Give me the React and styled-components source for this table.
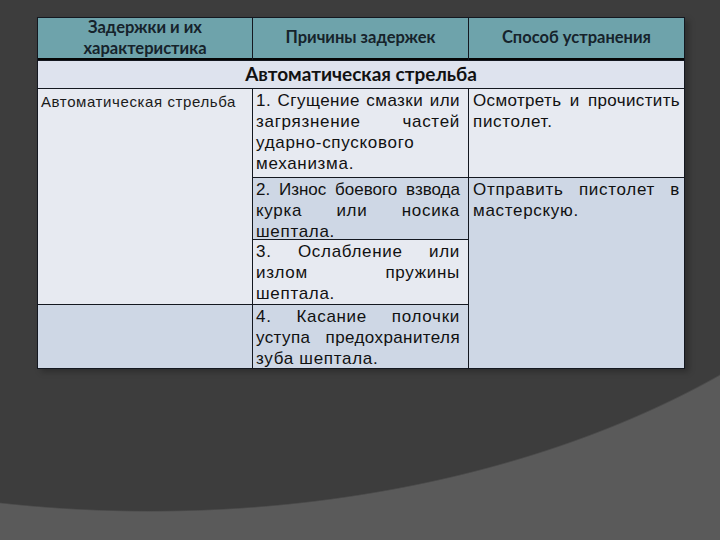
import React from 'react'
import styled, { createGlobalStyle } from 'styled-components'

const GlobalStyle = createGlobalStyle`
  html, body {
    margin: 0;
    padding: 0;
  }
  body {
    width: 720px;
    height: 540px;
    overflow: hidden;
  }
`

const Slide = styled.div`
  width: 720px;
  height: 540px;
  box-sizing: border-box;
  padding: 17px 0 0 37px;
  background:
    radial-gradient(840px 512px at 150px 0px, #3d3d3d 99.7%, #5a5a5a 100%);
`

const Table = styled.div`
  display: grid;
  grid-template-columns: 214px 215px 215px;
  grid-template-rows: 42px 27px 88px 61px 64px 63px;
  gap: 1px;
  width: 646px;
  background: #141820;
  border: 1px solid #141820;
  box-shadow: 4px 3px 6px rgba(0, 0, 0, 0.25);
`

const HeadCell = styled.div`
  background: #6ea3ab;
  border-bottom: 2px solid #050505;
  display: flex;
  align-items: center;
  justify-content: center;
  text-align: center;
  font-family: Lato, 'Open Sans', sans-serif;
  font-weight: 700;
  font-size: 16.5px;
  line-height: 21px;
  color: #16232b;
  padding-bottom: 1px;
`

const SectionCell = styled.div`
  grid-column: 1 / 4;
  background: #dee3ee;
  display: flex;
  align-items: center;
  justify-content: center;
  font-family: Lato, 'Open Sans', sans-serif;
  font-weight: 700;
  font-size: 19px;
  color: #111;
  padding-bottom: 2px;
`

const Cell = styled.div`
  grid-column: ${(p) => p.col};
  grid-row: ${(p) => p.row};
  background: ${(p) => (p.dark ? '#ced7e5' : '#e7eaf1')};
  font-family: 'Liberation Sans', Arial, sans-serif;
  font-size: 17px;
  line-height: 21px;
  color: #111;
  padding: ${(p) => (p.wide ? '1px 4px 0 4px' : '1px 8px 0 3px')};
`

const LabelCell = styled(Cell)`
  font-size: 15px;
  letter-spacing: 0.6px;
  padding: 2px 3px 0 3px;
  color: #1b1b1b;
`

const Line = styled.span`
  display: block;
  white-space: nowrap;
  letter-spacing: ${(p) => p.spacing || '0.7px'};
  word-spacing: ${(p) => p.words || 'normal'};
  text-align: left;
  text-align-last: ${(p) => (p.last ? 'left' : 'justify')};
`

const causes = [
  {
    row: '3',
    dark: false,
    lines: [['1. Сгущение смазки или', '0.45px'], ['загрязнение частей'], ['ударно-спускового'], ['механизма.']],
  },
  {
    row: '4',
    dark: true,
    lines: [['2. Износ боевого взвода', '0px', '-1px'], ['курка или носика'], ['шептала.']],
  },
  { row: '5', dark: false, lines: [['3. Ослабление или'], ['излом пружины'], ['шептала.']] },
  {
    row: '6',
    dark: true,
    lines: [['4. Касание полочки'], ['уступа предохранителя', '0.4px'], ['зуба шептала.']],
  },
]

const fixes = [
  { row: '3', dark: false, lines: [['Осмотреть и прочистить', '0.35px', '-5px'], ['пистолет.']] },
  { row: '4 / 7', dark: true, lines: [['Отправить пистолет в'], ['мастерскую.']] },
]

const renderLines = (lines) =>
  lines.map(([text, spacing, words], i) => (
    <Line key={i} spacing={spacing} words={words} last={i === lines.length - 1}>
      {text}
    </Line>
  ))

const App = () => {
  return (
    <>
      <GlobalStyle />
      <Slide>
        <Table>
          <HeadCell>Задержки и их<br />характеристика</HeadCell>
          <HeadCell>Причины задержек</HeadCell>
          <HeadCell>Способ устранения</HeadCell>

          <SectionCell>Автоматическая стрельба</SectionCell>

          <LabelCell col="1" row="3 / 6">Автоматическая стрельба</LabelCell>
          <Cell col="1" row="6" dark />

          {causes.map((c) => (
            <Cell key={c.row} col="2" row={c.row} dark={c.dark}>
              {renderLines(c.lines)}
            </Cell>
          ))}

          {fixes.map((f) => (
            <Cell key={f.row} col="3" row={f.row} dark={f.dark} wide>
              {renderLines(f.lines)}
            </Cell>
          ))}
        </Table>
      </Slide>
    </>
  )
}

export default App
